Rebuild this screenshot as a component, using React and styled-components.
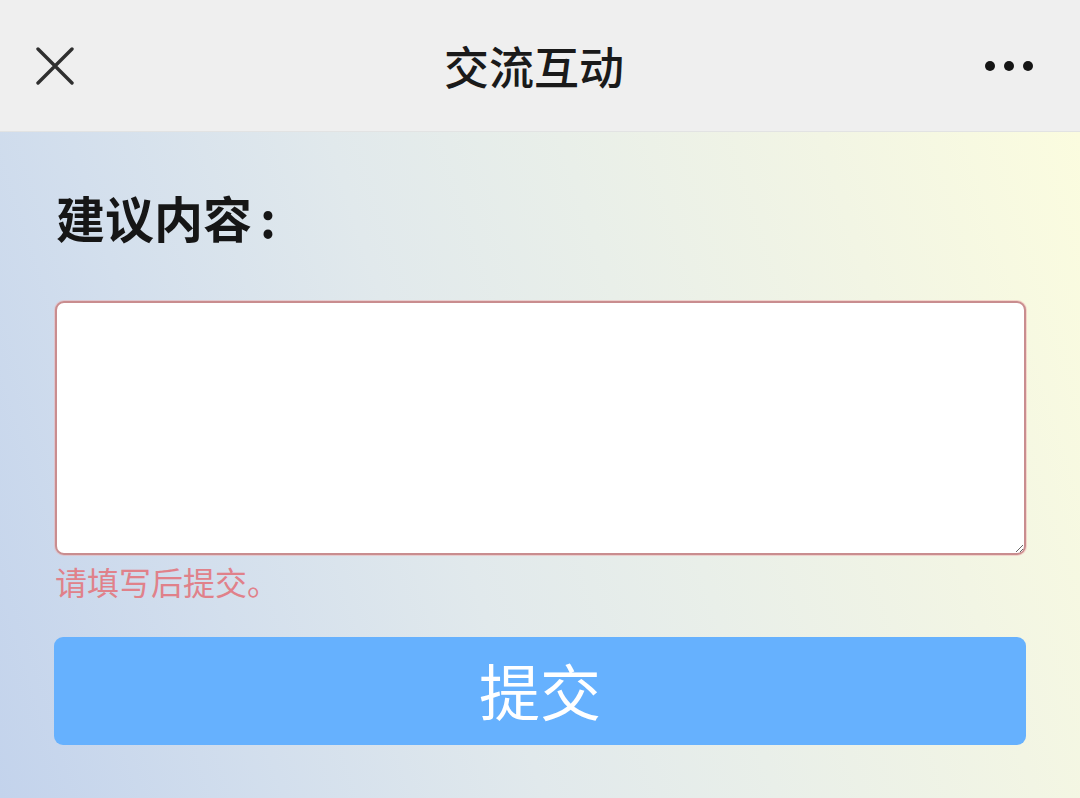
import React from "react";
import styled, { createGlobalStyle } from "styled-components";

const Global = createGlobalStyle`
  html, body { margin: 0; padding: 0; }
  body {
    width: 1080px;
    height: 798px;
    overflow: hidden;
    font-family: "Noto Sans CJK SC", "Noto Sans", sans-serif;
  }
`;

const Page = styled.div`
  width: 1080px;
  height: 798px;
  display: flex;
  flex-direction: column;
`;

const Header = styled.header`
  height: 131px;
  flex: none;
  background: #efefef;
  border-bottom: 1px solid #e2e3e3;
  display: grid;
  grid-template-columns: 120px 1fr 120px;
  align-items: center;
`;

const IconButton = styled.div`
  display: flex;
  align-items: center;
  justify-content: ${(p) => (p.$end ? "flex-end" : "flex-start")};
  padding: ${(p) => (p.$end ? "0 47px 0 0" : "0 0 0 36px")};
  height: 100%;
`;

const Title = styled.h1`
  margin: 0;
  padding-right: 12px;
  text-align: center;
  font-size: 45px;
  font-weight: 500;
  color: #1a1a1a;
  letter-spacing: 0;
  line-height: 1;
`;

const Dots = styled.div`
  display: flex;
  gap: 9px;
  align-items: center;
`;

const Dot = styled.span`
  width: 10px;
  height: 10px;
  border-radius: 50%;
  background: #151515;
`;

const Body = styled.main`
  flex: 1;
  background: linear-gradient(
    72deg,
    #c3d3ec 0%,
    #d3dfed 22%,
    #e1e9ec 42%,
    #e9efe9 60%,
    #f2f5e4 80%,
    #fbfcdf 100%
  );
  padding: 60px 54px 0 55px;
  display: flex;
  flex-direction: column;
`;

const Label = styled.div`
  font-size: 49px;
  font-weight: 700;
  color: #161616;
  line-height: 1;
  letter-spacing: 0;
  padding-left: 1px;
`;

const Colon = styled.span`
  margin-left: 8px;
`;

const TextArea = styled.textarea`
  margin-top: 60px;
  height: 254px;
  box-sizing: border-box;
  width: 100%;
  border: 2px solid #c98d8f;
  border-radius: 9px;
  background: #ffffff;
  box-shadow: 0 0 0 1px rgba(240, 170, 170, 0.45);
  outline: none;
  resize: vertical;
  font-family: inherit;
  display: block;
`;

const ErrorText = styled.div`
  margin-top: 10px;
  font-size: 32px;
  color: #e0818a;
  line-height: 1;
`;

const SubmitButton = styled.button`
  margin-top: 40px;
  height: 108px;
  width: 972px;
  margin-left: -1px;
  border: none;
  border-radius: 9px;
  background: #66b1fe;
  color: #ffffff;
  font-family: inherit;
  font-size: 61px;
  font-weight: 400;
  display: flex;
  align-items: center;
  justify-content: center;
  padding: 0 0 4px 0;
`;

function CloseIcon() {
  return (
    <svg width="38" height="38" viewBox="0 0 38 38">
      <path
        d="M2 2 L36 36 M36 2 L2 36"
        stroke="#2f2f2f"
        strokeWidth="3.4"
        strokeLinecap="round"
        fill="none"
      />
    </svg>
  );
}

export default function App() {
  return (
    <>
      <Global />
      <Page>
        <Header>
          <IconButton>
            <CloseIcon />
          </IconButton>
          <Title>交流互动</Title>
          <IconButton $end>
            <Dots>
              <Dot />
              <Dot />
              <Dot />
            </Dots>
          </IconButton>
        </Header>
        <Body>
          <Label>
            建议内容<Colon>:</Colon>
          </Label>
          <TextArea />
          <ErrorText>请填写后提交。</ErrorText>
          <SubmitButton>提交</SubmitButton>
        </Body>
      </Page>
    </>
  );
}
